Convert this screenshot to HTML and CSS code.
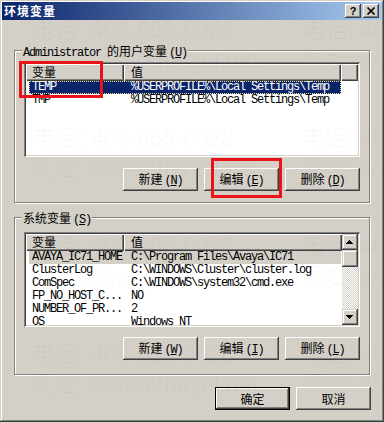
FILE: index.html
```html
<!DOCTYPE html>
<html lang="zh-CN">
<head>
    <meta charset="UTF-8">
    <title>环境变量</title>
    <link rel="stylesheet" href="styles.css">
</head>
<body>
    <div class="window">
        <!-- 标题栏 -->
        <div class="titlebar">
            <span class="title">环境变量</span>
            <div class="caption-btns">
                <span class="cbtn help">?</span>
                <span class="cbtn close">
                    <svg width="16" height="14" viewBox="0 0 16 14">
                        <path d="M4.5 3.5 L11.5 10.5 M11.5 3.5 L4.5 10.5" stroke="#000" stroke-width="1.7" fill="none"/>
                    </svg>
                </span>
            </div>
        </div>

        <div class="content">
            <!-- 用户变量 -->
            <div class="group group-user">
                <div class="legend">Administrator <span class="cn">的用户变量</span><span class="key">(<u>U</u>)</span></div>
                <div class="listview">
                    <div class="lv-main">
                        <div class="lv-head">
                            <span class="hcol hcol1 cn">变量</span>
                            <span class="hcol hcol2 cn">值</span>
                            <span class="hcol hfill"></span>
                        </div>
                        <div class="lv-row selected focus"><span class="c1">TEMP</span><span>%USERPROFILE%\Local Settings\Temp</span></div>
                        <div class="lv-row"><span class="c1">TMP</span><span>%USERPROFILE%\Local Settings\Temp</span></div>
                    </div>
                </div>
                <div class="btn-row">
                    <button class="btn">新建<span class="key">(<u>N</u>)</span></button>
                    <button class="btn">编辑<span class="key">(<u>E</u>)</span></button>
                    <button class="btn">删除<span class="key">(<u>D</u>)</span></button>
                </div>
            </div>

            <!-- 系统变量 -->
            <div class="group group-system">
                <div class="legend"><span class="cn">系统变量</span><span class="key">(<u>S</u>)</span></div>
                <div class="listview">
                    <div class="lv-main">
                        <div class="lv-head">
                            <span class="hcol hcol1 cn">变量</span>
                            <span class="hcol hcol2 wide cn">值</span>
                        </div>
                        <div class="lv-row inactive"><span class="c1">AVAYA_IC71_HOME</span><span>C:\Program Files\Avaya\IC71</span></div>
                        <div class="lv-row"><span class="c1">ClusterLog</span><span>C:\WINDOWS\Cluster\cluster.log</span></div>
                        <div class="lv-row"><span class="c1">ComSpec</span><span>C:\WINDOWS\system32\cmd.exe</span></div>
                        <div class="lv-row"><span class="c1">FP_NO_HOST_C...</span><span>NO</span></div>
                        <div class="lv-row"><span class="c1">NUMBER_OF_PR...</span><span>2</span></div>
                        <div class="lv-row"><span class="c1">OS</span><span>Windows NT</span></div>
                    </div>
                    <div class="scrollbar">
                        <span class="sb-btn">
                            <svg width="16" height="16" viewBox="0 0 16 16" shape-rendering="crispEdges">
                                <rect x="7" y="6" width="1" height="1"/><rect x="6" y="7" width="3" height="1"/>
                                <rect x="5" y="8" width="5" height="1"/><rect x="4" y="9" width="7" height="1"/>
                            </svg>
                        </span>
                        <span class="sb-thumb"></span>
                        <span class="sb-track"></span>
                        <span class="sb-btn">
                            <svg width="16" height="16" viewBox="0 0 16 16" shape-rendering="crispEdges">
                                <rect x="4" y="6" width="7" height="1"/><rect x="5" y="7" width="5" height="1"/>
                                <rect x="6" y="8" width="3" height="1"/><rect x="7" y="9" width="1" height="1"/>
                            </svg>
                        </span>
                    </div>
                </div>
                <div class="btn-row">
                    <button class="btn">新建<span class="key">(<u>W</u>)</span></button>
                    <button class="btn">编辑<span class="key">(<u>I</u>)</span></button>
                    <button class="btn">删除<span class="key">(<u>L</u>)</span></button>
                </div>
            </div>

            <!-- 确定 / 取消 -->
            <div class="dlg-btns">
                <button class="btn default">确定</button>
                <button class="btn">取消</button>
            </div>
        </div>

        <!-- 红框标注 -->
        <div class="mark mark-var"></div>
        <div class="mark mark-edit"></div>

        <!-- 水印 -->
        <div class="watermark">
            <div class="wm"><div>电话: 400-665-0028</div><div>网址: www.chanjet.net</div></div>
            <div class="wm"><div>电话: 400-665-0028</div><div>网址: www.chanjet.net</div></div>
            <div class="wm"><div>电话: 400-665-0028</div><div>网址: www.chanjet.net</div></div>
            <div class="wm"><div>电话: 400-665-0028</div><div>网址: www.chanjet.net</div></div>
            <div class="wm"><div>电话: 400-665-0028</div><div>网址: www.chanjet.net</div></div>
            <div class="wm"><div>电话: 400-665-0028</div><div>网址: www.chanjet.net</div></div>
            <div class="wm"><div>电话: 400-665-0028</div><div>网址: www.chanjet.net</div></div>
            <div class="wm"><div>电话: 400-665-0028</div><div>网址: www.chanjet.net</div></div>
        </div>
    </div>
</body>
</html>
```

FILE: styles.css
```css
body {
    margin: 0;
    background: #D4D0C8;
    font-family: "Liberation Mono", "Noto Sans CJK SC", monospace;
    font-size: 12px;
    letter-spacing: -1.2px;
    color: #000;
}

.cn {
    font-family: "Noto Sans CJK SC", sans-serif;
    letter-spacing: 0;
}

.key {
    margin-left: 2px;
    letter-spacing: -1.2px;
}

.window {
    position: relative;
    width: 384px;
    height: 422px;
    box-sizing: border-box;
    padding: 2px;
    background: #D4D0C8;
    box-shadow: inset -1px -1px #404040, inset 1px 1px #D4D0C8, inset -2px -2px #808080, inset 2px 2px #fff;
    overflow: hidden;
}

/* 标题栏 */
.titlebar {
    height: 18px;
    display: flex;
    align-items: center;
    justify-content: space-between;
    padding: 0 3px 0 2px;
    background: linear-gradient(to right, #0A246A, #A6CAF0);
}

.title {
    color: #fff;
    font-family: "Noto Sans CJK SC", sans-serif;
    font-weight: bold;
    font-size: 12px;
    letter-spacing: 1px;
    line-height: 18px;
}

.caption-btns {
    display: flex;
    gap: 2px;
}

.cbtn {
    width: 16px;
    height: 14px;
    box-sizing: border-box;
    background: #D4D0C8;
    box-shadow: inset -1px -1px #404040, inset 1px 1px #fff, inset -2px -2px #808080;
    display: flex;
    align-items: center;
    justify-content: center;
}

.help {
    font-family: "Liberation Sans", sans-serif;
    font-weight: bold;
    font-size: 11px;
    letter-spacing: 0;
    line-height: 14px;
}

/* 内容 */
.content {
    display: flex;
    flex-direction: column;
}

.group {
    margin-left: 12px;
    width: 356px;
    box-sizing: border-box;
    border: 1px solid #808080;
    box-shadow: inset 1px 1px #fff, 1px 1px #fff;
    padding: 0 9px;
}

.group-user {
    margin-top: 30px;
    padding-bottom: 11px;
}

.group-system {
    margin-top: 14px;
    padding-bottom: 14px;
}

.legend {
    display: block;
    width: fit-content;
    margin: -7px 0 0 -2px;
    padding: 0 1px;
    height: 13px;
    line-height: 13px;
    background: #D4D0C8;
    white-space: pre;
}

/* 列表 */
.listview {
    height: 95px;
    box-sizing: border-box;
    background: #fff;
    box-shadow: inset 1px 1px #808080, inset -1px -1px #fff, inset 2px 2px #404040, inset -2px -2px #D4D0C8;
    padding: 2px;
    display: flex;
    overflow: hidden;
}

.group-user .listview {
    margin-top: 5px;
}

.group-system .listview {
    margin-top: 8px;
}

.lv-main {
    flex: 1;
    overflow: hidden;
}

.lv-head {
    display: flex;
    height: 17px;
}

.hcol {
    height: 17px;
    box-sizing: border-box;
    background: #D4D0C8;
    box-shadow: inset 1px 1px #fff, inset -1px -1px #404040, inset -2px -2px #808080;
    line-height: 16px;
}

.hcol1 {
    width: 98px;
    padding-left: 6px;
}

.hcol2 {
    width: 217px;
    padding-left: 7px;
}

.hcol2.wide {
    flex: 1;
}

.hfill {
    flex: 1;
}

.lv-row {
    display: flex;
    height: 13px;
    line-height: 13px;
    margin-left: 3px;
    width: 312px;
    box-sizing: border-box;
    padding-left: 3px;
    white-space: pre;
}

.lv-row .c1 {
    width: 99px;
    flex: none;
}

.lv-row.selected {
    background: #0A246A;
    color: #fff;
}

.lv-row.focus {
    outline: 1px dotted #E8D890;
    outline-offset: -1px;
}

.lv-row.inactive {
    background: #D4D0C8;
}

/* 滚动条 */
.scrollbar {
    width: 16px;
    display: flex;
    flex-direction: column;
}

.sb-btn,
.sb-thumb {
    height: 16px;
    flex: none;
    background: #D4D0C8;
    box-shadow: inset -1px -1px #404040, inset 1px 1px #D4D0C8, inset -2px -2px #808080, inset 2px 2px #fff;
}

.sb-btn svg {
    display: block;
}

.sb-thumb {
    height: 17px;
}

.sb-track {
    flex: 1;
    background: repeating-conic-gradient(#fff 0 25%, #D4D0C8 0 50%) 0 0 / 2px 2px;
}

/* 按钮 */
.btn-row {
    display: flex;
    justify-content: flex-end;
    gap: 6px;
    margin-top: 11px;
}

.group-system .btn-row {
    margin-top: 10px;
}

.btn {
    width: 75px;
    height: 23px;
    box-sizing: border-box;
    border: none;
    padding: 0;
    background: #D4D0C8;
    box-shadow: inset -1px -1px #404040, inset 1px 1px #fff, inset -2px -2px #808080, inset 2px 2px #D4D0C8;
    font-family: "Noto Sans CJK SC", sans-serif;
    font-size: 12px;
    letter-spacing: 0;
    color: #000;
    line-height: 21px;
}

.btn .key {
    font-family: "Liberation Mono", monospace;
}

.btn.default {
    border: 1px solid #000;
}

.dlg-btns {
    display: flex;
    justify-content: flex-end;
    gap: 6px;
    margin-top: 12px;
    padding-right: 11px;
}

/* 红框 */
.mark {
    position: absolute;
    border: 3px solid #E8141A;
    box-sizing: border-box;
}

.mark-var {
    left: 19px;
    top: 61px;
    width: 84px;
    height: 37px;
}

.mark-edit {
    left: 211px;
    top: 158px;
    width: 71px;
    height: 40px;
}

/* 水印 */
.watermark {
    position: absolute;
    inset: 0;
    pointer-events: none;
    display: grid;
    grid-template-columns: 270px 270px;
    grid-auto-rows: 108px;
    padding: 15px 0 0 32px;
    font-family: "Liberation Sans", "Noto Sans CJK SC", sans-serif;
    font-size: 23px;
    letter-spacing: 0;
    line-height: 30px;
    color: rgba(0, 0, 0, 0.028);
    white-space: nowrap;
}
```
